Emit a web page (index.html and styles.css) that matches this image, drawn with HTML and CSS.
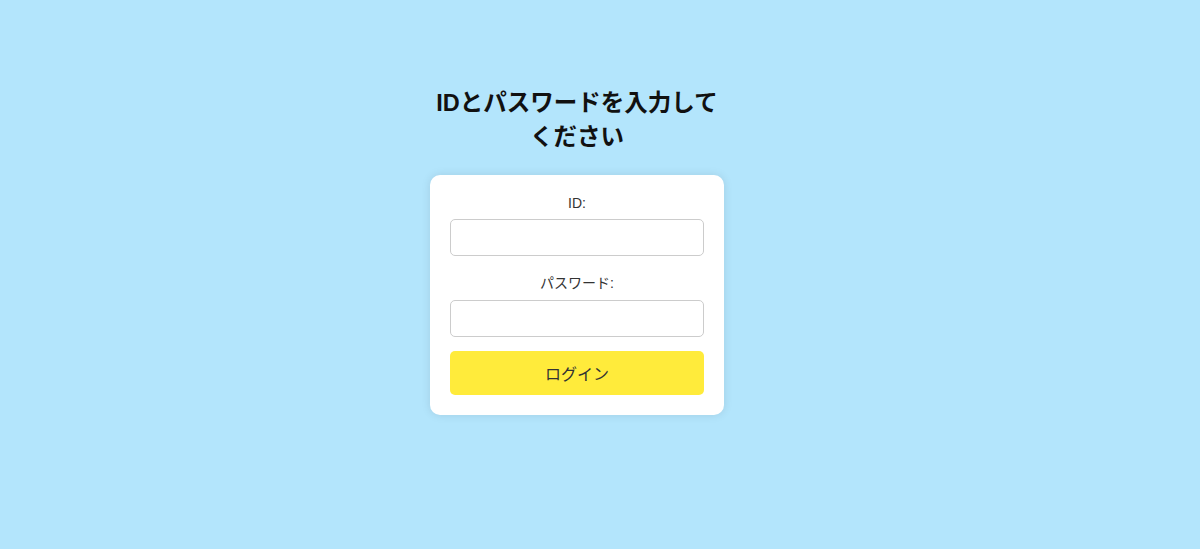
FILE: index.html
```html
<!DOCTYPE html>
<html lang="ja">
<head>
    <meta charset="UTF-8">
    <meta name="viewport" content="width=device-width, initial-scale=1.0">
    <title>ログイン</title>
    <link rel="stylesheet" href="styles.css">
</head>
<body>
    <div class="wrapper">
        <h2 class="title">IDとパスワードを入力してください</h2>
        <form class="login-box" id="loginForm">
            <label for="userId">ID:</label>
            <input type="text" id="userId" name="userId">

            <label for="password">パスワード:</label>
            <input type="password" id="password" name="password">

            <button type="submit">ログイン</button>
        </form>
    </div>
</body>
</html>
```

FILE: styles.css
```css
body {
    font-family: Arial, "Liberation Sans", "Noto Sans CJK JP", sans-serif;
    margin: 0;
    padding-right: 46px;
    box-sizing: border-box;
    height: 100vh;
    background-color: #b3e5fc;
    display: flex;
    flex-direction: column;
    align-items: center;
}

.wrapper {
    width: 294px;
    margin-top: 86px;
}

.title {
    font-size: 23.5px;
    font-weight: bold;
    line-height: 34px;
    text-align: center;
    color: #111;
    margin: 0 0 21px 0;
}

.login-box {
    background-color: #fff;
    padding: 20px;
    border-radius: 10px;
    box-shadow: 0 0 10px rgba(0, 0, 0, 0.1);
    display: flex;
    flex-direction: column;
}

label {
    font-size: 14px;
    color: #333;
    text-align: center;
    margin-bottom: 8px;
}

input[type="text"],
input[type="password"] {
    height: 37px;
    box-sizing: border-box;
    padding: 8px;
    border: 1px solid #ccc;
    border-radius: 5px;
    margin-bottom: 16px;
    font-size: 14px;
}

input[type="password"] {
    margin-bottom: 14px;
}

button {
    height: 44px;
    border: none;
    border-radius: 5px;
    background-color: #ffeb3b;
    color: #333;
    font-size: 16px;
    font-family: inherit;
    cursor: pointer;
}

button:hover {
    background-color: #fdd835;
}
```
